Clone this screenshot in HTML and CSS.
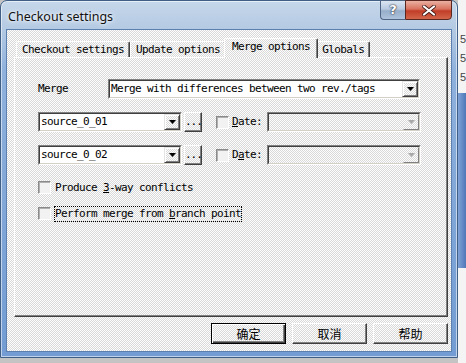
FILE: index.html
```html
<!DOCTYPE html>
<html>
<head>
<meta charset="utf-8">
<title>Checkout settings</title>
<link rel="stylesheet" href="styles.css">
</head>
<body>
<div class="window">
  <div class="titlebar">
    <span class="title">Checkout settings</span>
    <div class="caption-btns">
      <div class="cap-help">?</div>
      <div class="cap-close">
        <svg width="14" height="11" viewBox="0 0 14 11"><path d="M2 1.5 L12 9.5 M12 1.5 L2 9.5" stroke="#3a1410" stroke-width="3.6" stroke-linecap="round"/><path d="M2 1.5 L12 9.5 M12 1.5 L2 9.5" stroke="#fff" stroke-width="2.2" stroke-linecap="round"/></svg>
      </div>
    </div>
  </div>
  <div class="client">
    <div class="tabs">
      <div class="tab">Checkout settings</div>
      <div class="tab">Update options</div>
      <div class="tab active">Merge options</div>
      <div class="tab">Globals</div>
    </div>
    <div class="page">
      <div class="row">
        <span class="lbl">Merge</span>
        <div class="combo merge">
          <div class="in">
            <span class="val">Merge with differences between two rev./tags</span>
            <span class="drop"><svg width="7" height="4" viewBox="0 0 7 4"><polygon points="0,0 7,0 3.5,4" fill="#000"/></svg></span>
          </div>
        </div>
      </div>
      <div class="row gap">
        <div class="combo src">
          <div class="in">
            <span class="val">source_0_01</span>
            <span class="drop"><svg width="7" height="4" viewBox="0 0 7 4"><polygon points="0,0 7,0 3.5,4" fill="#000"/></svg></span>
          </div>
        </div>
        <div class="dots">...</div>
        <span class="cb"></span>
        <span class="datelbl"><u>D</u>ate:</span>
        <div class="combo date disabled">
          <div class="in">
            <span class="val"></span>
            <span class="drop"><svg width="7" height="4" viewBox="0 0 7 4"><polygon points="0,0 7,0 3.5,4" fill="#a8a8a8"/></svg></span>
          </div>
        </div>
      </div>
      <div class="row gap">
        <div class="combo src">
          <div class="in">
            <span class="val">source_0_02</span>
            <span class="drop"><svg width="7" height="4" viewBox="0 0 7 4"><polygon points="0,0 7,0 3.5,4" fill="#000"/></svg></span>
          </div>
        </div>
        <div class="dots">...</div>
        <span class="cb"></span>
        <span class="datelbl">D<u>a</u>te:</span>
        <div class="combo date disabled">
          <div class="in">
            <span class="val"></span>
            <span class="drop"><svg width="7" height="4" viewBox="0 0 7 4"><polygon points="0,0 7,0 3.5,4" fill="#a8a8a8"/></svg></span>
          </div>
        </div>
      </div>
      <div class="check first">
        <span class="cb"></span>
        <span class="cbl">Produce <u>3</u>-way conflicts</span>
      </div>
      <div class="check second">
        <span class="cb"></span>
        <span class="cbl focus">Perform merge from <u>b</u>ranch point</span>
      </div>
    </div>
    <div class="buttons">
      <div class="btn default">确定</div>
      <div class="btn">取消</div>
      <div class="btn">帮助</div>
    </div>
  </div>
</div>
<div class="side">
  <span>5</span>
  <span>5</span>
  <span>5</span>
  <div class="bar"></div>
</div>
</body>
</html>
```

FILE: styles.css
```css
* { box-sizing: border-box; margin: 0; padding: 0; }

html, body { width: 466px; height: 363px; overflow: hidden; }

body {
  display: flex;
  align-items: flex-start;
  background: #c4c4c4;
  font-family: "DejaVu Sans Mono", monospace;
  font-size: 11px;
  letter-spacing: -0.62px;
  color: #000;
}

.window {
  flex: none;
  width: 458px;
  height: 358px;
  display: flex;
  flex-direction: column;
  border: 1px solid #3f5f86;
  border-radius: 7px 7px 0 0;
  background: linear-gradient(to bottom, #c6d7ea 0px, #b4cae3 28px, #8fb1dc 70px, #729cd3 100%);
  box-shadow: inset 0 0 0 1px rgba(255, 255, 255, 0.55);
}

.titlebar {
  flex: none;
  height: 29px;
  display: flex;
  align-items: flex-start;
  justify-content: space-between;
}

.title {
  margin: 7px 0 0 7px;
  font-family: "Noto Sans", sans-serif;
  font-size: 12.5px;
  letter-spacing: 0;
  line-height: 18px;
  color: #111;
  text-shadow: 0 0 6px #fff, 0 0 3px #fff;
}

.caption-btns {
  display: flex;
  margin: -1px 5px 0 0;
}

.cap-help {
  width: 25px;
  height: 20px;
  border: 1px solid #4f6584;
  border-right: none;
  border-radius: 0 0 0 4px;
  background: linear-gradient(to bottom, #dbe6f2 0%, #b7c9e0 45%, #97aeca 55%, #aec3dc 100%);
  color: #fff;
  font-family: "DejaVu Sans", sans-serif;
  font-weight: bold;
  font-size: 13px;
  letter-spacing: 0;
  line-height: 18px;
  text-align: center;
  text-shadow: 0 0 2px #223, 0 0 1px #223;
}

.cap-close {
  width: 47px;
  height: 20px;
  border: 1px solid #5a2720;
  border-radius: 0 0 4px 0;
  background: linear-gradient(to bottom, #eab0a2 0%, #d8725e 45%, #c13d26 55%, #d3664b 100%);
  display: flex;
  align-items: center;
  justify-content: center;
}

.client {
  flex: 1;
  margin: 0 6px 6px 6px;
  padding: 8px 3px 7px 7px;
  display: flex;
  flex-direction: column;
  background: repeating-conic-gradient(#fdfdfd 0 25%, #d9d9d9 0 50%) 0 0 / 2px 2px;
  box-shadow: 0 0 0 1px #5b7fae;
}

.tabs {
  flex: none;
  height: 19px;
  display: flex;
  align-items: flex-end;
  padding-left: 2px;
  position: relative;
  z-index: 1;
}

.tab {
  height: 16px;
  padding: 0 5px;
  line-height: 15px;
  white-space: nowrap;
  border-top: 1px solid #fff;
  border-left: 1px solid #fff;
  border-right: 1px solid #404040;
  border-radius: 2px 2px 0 0;
  box-shadow: inset -1px 0 #808080;
}

.tab.active {
  height: 20px;
  margin: 0 -2px -1px -2px;
  padding: 0 7px 2px 7px;
  line-height: 16px;
  background: repeating-conic-gradient(#fdfdfd 0 25%, #d9d9d9 0 50%) 0 0 / 2px 2px;
  position: relative;
  z-index: 2;
}

.page {
  flex: none;
  height: 260px;
  padding: 21px 0 0 23px;
  border: 1px solid;
  border-color: #fff #404040 #404040 #fff;
  box-shadow: inset -1px -1px #808080;
}

.row {
  display: flex;
  align-items: center;
  height: 20px;
}

.row.gap { margin-top: 13px; }

.lbl {
  width: 70px;
  line-height: 14px;
}

.combo {
  height: 20px;
  display: flex;
  border: 1px solid;
  border-color: #808080 #fff #fff #808080;
}

.combo .in {
  flex: 1;
  display: flex;
  border: 1px solid;
  border-color: #404040 #d4d0c8 #d4d0c8 #404040;
  background: #fff;
}

.combo .val {
  flex: 1;
  padding-left: 1px;
  line-height: 16px;
  white-space: nowrap;
  overflow: hidden;
}

.combo .drop {
  flex: none;
  width: 16px;
  height: 16px;
  display: flex;
  align-items: center;
  justify-content: center;
  border: 1px solid;
  border-color: #e4e4e4 #404040 #404040 #e4e4e4;
  box-shadow: inset 1px 1px #fff, inset -1px -1px #808080;
  background: repeating-conic-gradient(#fdfdfd 0 25%, #d9d9d9 0 50%) 0 0 / 2px 2px;
}

.combo.disabled .in {
  background: repeating-conic-gradient(#fdfdfd 0 25%, #d9d9d9 0 50%) 0 0 / 2px 2px;
}

.combo.disabled .drop {
  border-color: transparent #808080 #808080 transparent;
  box-shadow: none;
  background: transparent;
}

.merge { width: 312px; }
.src { width: 144px; }
.date { width: 154px; }

.dots {
  width: 18px;
  height: 20px;
  margin-left: 2px;
  border: 1px solid;
  border-color: #fff #404040 #404040 #fff;
  box-shadow: inset -1px -1px #808080;
  text-align: center;
  line-height: 17px;
  letter-spacing: -1px;
}

.cb {
  flex: none;
  width: 13px;
  height: 13px;
  border: 1px solid;
  border-color: #8a8a8a #fff #fff #8a8a8a;
  box-shadow: inset 1px 1px #b0b0b0;
  background: #f2f2f2;
}

.row .cb { margin-left: 14px; }

.datelbl {
  width: 30px;
  margin: 0 5px 0 3px;
  line-height: 14px;
  white-space: nowrap;
}

.check {
  display: flex;
  align-items: center;
  height: 13px;
}

.check.first { margin-top: 16px; }
.check.second { margin-top: 13px; }

.cbl {
  margin-left: 3px;
  padding: 1px 1px;
  line-height: 14px;
  white-space: nowrap;
}

.cbl.focus {
  outline: 1px dotted #000;
  outline-offset: -1px;
}

.buttons {
  display: flex;
  justify-content: flex-end;
  gap: 6px;
  margin-top: 6px;
}

.btn {
  width: 75px;
  height: 21px;
  display: flex;
  align-items: center;
  justify-content: center;
  border: 1px solid;
  border-color: #fff #404040 #404040 #fff;
  box-shadow: inset -1px -1px #808080;
  font-family: "Noto Sans CJK SC", sans-serif;
  font-size: 12px;
  letter-spacing: 0;
  line-height: 16px;
}

.btn.default {
  border-color: #000;
  box-shadow: inset 1px 1px #fff, inset -1px -1px #404040, inset -2px -2px #808080;
}

.side {
  flex: 1;
  height: 363px;
  display: flex;
  flex-direction: column;
  padding: 30px 0 0 2px;
  background: #f4f4f4;
  font-family: "Liberation Sans", sans-serif;
  font-size: 11px;
  letter-spacing: 0;
  line-height: 19px;
  color: #444;
  overflow: hidden;
}

.side .bar {
  margin: 6px 0 0 -2px;
  width: 8px;
  height: 175px;
  background: linear-gradient(to right, #7fa2d6, #4f78b8);
}
```
